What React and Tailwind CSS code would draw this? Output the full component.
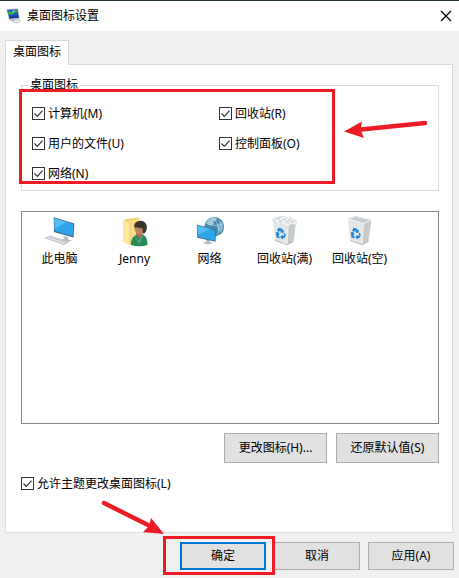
import React, { useState } from "react";

const DESKTOP_OPTIONS = [
  { id: "computer", label: "计算机(M)" },
  { id: "recycle", label: "回收站(R)" },
  { id: "files", label: "用户的文件(U)" },
  { id: "panel", label: "控制面板(O)" },
  { id: "network", label: "网络(N)" },
];

function TitleIcon() {
  return (
    <svg className="h-4 w-4" viewBox="0 0 16 16" aria-hidden="true">
      <path d="M2 10l9-1 3 3-5 2-5-1z" fill="#c3c7ca" />
      <path d="M.5 1L12 .5l1.500 10L3 11z" fill="#aeb8c2" />
      <path d="M1.300 2L11.500 1.300l1.200 8.500L3.500 10.500z" fill="#2450c8" />
      <path d="M1.500 4c2-1.500 3-.5 4 0s3-2.600 6-2.200l.4 2.200c-3-.3-4 2.500-6 2.800S3.500 5.500 2.300 7z" fill="#2fae4e" />
      <path d="M3.200 8.500c3-2 6 .5 9.200-1.500l.3 2.800-9.200.7z" fill="#173c96" />
      <path d="M6 3l3-1-2 3z" fill="#8fd4f0" />
      <path d="M8 12l4-1.500 2.500 2-3 2.700-4.500-1z" fill="#e4e6e6" stroke="#999" strokeWidth=".4" />
    </svg>
  );
}

function ComputerIcon() {
  return (
    <svg className="h-8 w-8" viewBox="0 0 32 32" aria-hidden="true">
      <path d="M19 20l5 1v2.500l4 .8-4 1.400-6-2 2.500-1z" fill="#b3bdc4" />
      <path d="M9.700 1.300l20.600 6.200-.8 14L10 16z" fill="#37647f" />
      <path d="M10.400 2.300l19 5.800-.7 12.200-18.100-5.200z" fill="#2ea4ec" />
      <path d="M10.400 2.300l12 3.700-11.800 7z" fill="#58bcf6" />
      <path d="M1.300 22l5-1.800 18.200 5.700-4.500 2.600z" fill="#d5dadd" stroke="#a3adb4" strokeWidth=".6" />
      <path d="M3.500 21.500l16.500 5.400M6 22.800l3.500-1.500M10 24.100l3.500-1.500M14 25.400l3.500-1.500M18 26.700l3.500-1.500" fill="none" stroke="#eef1f2" strokeWidth=".6" />
      <path d="M5 21l16.500 5.300" fill="none" stroke="#9aa6ae" strokeWidth=".5" />
    </svg>
  );
}

function UserFolderIcon() {
  return (
    <svg className="h-8 w-8" viewBox="0 0 32 32" aria-hidden="true">
      <path d="M5 3.500L18.500 1.500l2 1V26l-9 3z" fill="#f0cf71" />
      <path d="M9 5l11-2.500v23l-9 3z" fill="#f8dc86" />
      <path d="M4 3.300L11 7v22.500L4 25.500z" fill="#ffe99f" />
      <path d="M11 7v22.500" stroke="#e2bd5c" strokeWidth=".6" />
      <path d="M12 29c-.5-7 3.500-10 8-11 5-.5 8.500 2.500 8.500 11-5 1.600-11 1.600-16.500 0z" fill="#2a8a5b" />
      <path d="M15 20.500l5 4 2-5 2 .5-3.500 8.500z" fill="#49a878" />
      <path d="M17.500 15.500l5 1-.5 5-2 1.200-3-3.400z" fill="#a06e4e" />
      <ellipse cx="20.700" cy="13.200" rx="4.900" ry="5.200" fill="#bd8460" />
      <path d="M15.700 12.500c-1.700-5 2-7.800 6-7.700 5 .2 7.600 5 5.500 10-.6 1.700-1.700 2.700-2.900 3-.8-1.800-.5-4-1-5.800-2.600.4-4.700-.2-6.100-1-.8.400-1.200 1-1.500 1.500z" fill="#3b352d" />
    </svg>
  );
}

function NetworkIcon() {
  return (
    <svg className="h-8 w-8" viewBox="0 0 32 32" aria-hidden="true">
      <circle cx="20.300" cy="10.800" r="9.800" fill="#4a86ab" />
      <path d="M12.500 6c2-3.500 6-5 9.500-4.500l1 2.500-3.500 1.500.5 2.500-3.500 1.500-2.500-1z" fill="#9fcbdd" />
      <path d="M25 4l3.500 3 .8 4.500-2.300 5-3-2-.8-4 2.300-2z" fill="#82b8d2" />
      <path d="M11.500 7c5 2.500 11 3 17 1M18 1.200c6 5 8 11 5.500 19" fill="none" stroke="#b9dbe9" strokeWidth=".7" />
      <path d="M12 23l4 1v2l3 1-5 1.500-5.500-1.700 3.500-1z" fill="#b4bec5" />
      <path d="M2.800 8.500L22 13.600l-.4 12.200L3.300 21.800z" fill="#3d738f" />
      <path d="M3.600 9.600l17.600 4.800-.4 10.300L4.100 21z" fill="#2fa6ec" />
      <path d="M3.600 9.600l13 3.500-12.700 5.500z" fill="#52baf6" />
    </svg>
  );
}

function RecycleBinIcon({ full }) {
  return (
    <svg className="h-8 w-8" viewBox="0 0 32 32" aria-hidden="true">
      <path d="M3.700 3L11.700 .5l15.600 3.700-8 3.300z" fill="#c9cdd0" />
      <path d="M3.700 3l15.600 4.500L18 28.700 6 24.500z" fill="#e3e6e8" />
      <path d="M19.300 7.500l8-3.300L24.500 25.500 18 28.700z" fill="#c5cacd" />
      <path d="M3.700 3l15.600 4.500 8-3.300M19.300 7.500L18 28.700" fill="none" stroke="#f6f7f8" strokeWidth=".9" />
      <path d="M3.700 3L11.700 .5l15.600 3.700" fill="none" stroke="#dde1e3" strokeWidth=".9" />
      <path d="M6 24.500l12 4.200 6.500-3.200" fill="none" stroke="#a9b0b5" strokeWidth=".8" />
      {full && (
        <g>
          <path d="M3.700 4l3-3 4 .8L14 0l4 1.500 4-.5 2.500 2.500 3 1.500-.5 4-5-1-4 3.500-4-3.500-4.500 1-3.500-3z" fill="#eff1f2" stroke="#c8cdd0" strokeWidth=".5" />
          <path d="M6 4l3.500-2 2 3.500 4-3 1.500 4 4.500-3.500 1 3.500 3-1.500M10 6l2.500 1.500M18 8l3-2" fill="none" stroke="#b6bdc1" strokeWidth=".7" />
        </g>
      )}
      <g fill="#1c84d9">
        <path d="M8 14.500l1.600-2.700 3.200.8 1 1.600 1.200-.3-.8 3.400-3.300-1.200 1-.5-.8-1.300-1 1.700z" />
        <path d="M15.800 16.700l1 2.800-1.700 2.700-1.600.1v1.400l-2.300-2.700 2.500-2.200v1.200l1.300-.3.300-.9-.7-1.300z" />
        <path d="M6.300 16.200l3-.2 1.500 3-1-.4-.5 1.200 1.200.6-.1 2.200-2.600-1.200-.9-2.700.5-1.500z" />
      </g>
    </svg>
  );
}

const ICONS = [
  { id: "pc", label: "此电脑", icon: <ComputerIcon /> },
  { id: "user", label: "Jenny", icon: <UserFolderIcon /> },
  { id: "net", label: "网络", icon: <NetworkIcon /> },
  { id: "full", label: "回收站(满)", icon: <RecycleBinIcon full /> },
  { id: "empty", label: "回收站(空)", icon: <RecycleBinIcon /> },
];

function Checkbox({ id, label, checked, onChange }) {
  return (
    <label htmlFor={id} className="flex h-[13px] items-center gap-[3px] whitespace-nowrap">
      <span className="grid h-[13px] w-[13px] shrink-0">
        <input
          id={id}
          type="checkbox"
          checked={checked}
          onChange={onChange}
          className="peer col-start-1 row-start-1 h-[13px] w-[13px] appearance-none border border-[#333] bg-white"
        />
        <svg
          className="pointer-events-none invisible col-start-1 row-start-1 h-[13px] w-[13px] peer-checked:visible"
          viewBox="0 0 13 13"
          aria-hidden="true"
        >
          <path d="M2.500 6.500l2.800 2.800 5.200-5.600" fill="none" stroke="#333" strokeWidth="1.200" />
        </svg>
      </span>
      {label}
    </label>
  );
}

function Button({ children, className }) {
  return (
    <button type="button" className={`border bg-[#e1e1e1] whitespace-nowrap ${className}`}>
      {children}
    </button>
  );
}

export default function App() {
  const [checked, setChecked] = useState({
    computer: true,
    recycle: true,
    files: true,
    panel: true,
    network: true,
    theme: true,
  });

  const toggle = (id) => setChecked({ ...checked, [id]: !checked[id] });

  return (
    <div className="bg-[#f0f0f0] font-['Noto_Sans','Noto_Sans_CJK_SC',sans-serif] text-[12px] leading-[14px] text-black">
      {/* Title bar */}
      <header className="flex h-[31px] items-center border-t border-[#26343b] bg-white pr-[7px] pl-[6px]">
        <TitleIcon />
        <h1 className="ml-[5px] flex-1">桌面图标设置</h1>
        <button type="button" aria-label="关闭" className="flex h-3 w-3 items-center justify-center">
          <svg className="h-3 w-3" viewBox="0 0 12 12" aria-hidden="true">
            <path d="M1 1l10 10M11 1L1 11" stroke="#000" strokeWidth="1.200" />
          </svg>
        </button>
      </header>

      <main className="pt-[9px] pr-[6px] pl-[5px]">
        {/* Tabs */}
        <div role="tablist" className="flex">
          <button
            type="button"
            role="tab"
            aria-selected="true"
            className="z-10 -mb-px h-[25px] border border-b-0 border-[#d9d9d9] bg-white px-[7px] pb-[2px]"
          >
            桌面图标
          </button>
        </div>

        <section className="border border-[#dcdcdc] bg-white pt-[13px] pr-[13px] pb-[42px] pl-[15px]">
          <div className="relative">
            <fieldset className="border border-[#dcdcdc] pb-[10px] pl-[10px]">
              <legend className="-ml-[4px] px-[2px]">桌面图标</legend>
              <div className="grid grid-cols-[187px_1fr] gap-y-[17px] pt-[15px]">
                {DESKTOP_OPTIONS.map((o) => (
                  <Checkbox
                    key={o.id}
                    id={o.id}
                    label={o.label}
                    checked={checked[o.id]}
                    onChange={() => toggle(o.id)}
                  />
                ))}
              </div>
            </fieldset>
            {/* Callout over the options */}
            <div className="pointer-events-none absolute top-[11px] -left-[2px] h-[95px] w-[316px] border-3 border-[#ed1c24]" />
            <svg
              className="pointer-events-none absolute top-[38px] left-[322px] h-[26px] w-[86px]"
              viewBox="0 0 86 26"
              aria-hidden="true"
            >
              <path d="M82 7L18 13.500" stroke="#ed1c24" strokeWidth="4.500" strokeLinecap="round" />
              <path d="M1 15.500L19 5.500l-1.500 8.500 3.500 8z" fill="#ed1c24" />
            </svg>
          </div>

          {/* Icon preview list */}
          <ul className="mt-5 flex h-[213px] items-start border border-[#828790] pt-[4px]">
            {ICONS.map((i) => (
              <li key={i.id} className="flex w-[75px] flex-col items-center gap-[4px] whitespace-nowrap">
                {i.icon}
                <span>{i.label}</span>
              </li>
            ))}
          </ul>

          <div className="mt-[9px] flex justify-end gap-[9px]">
            <Button className="h-[30px] w-[103px] border-[#adadad]">更改图标(H)...</Button>
            <Button className="h-[30px] w-[103px] border-[#adadad]">还原默认值(S)</Button>
          </div>

          <div className="mt-[14px] flex">
            <Checkbox
              id="theme"
              label="允许主题更改桌面图标(L)"
              checked={checked.theme}
              onChange={() => toggle("theme")}
            />
          </div>
        </section>
      </main>

      <footer className="flex justify-end gap-2 pt-[9px] pr-[5px] pb-2">
        <div className="relative">
          <Button className="h-[28px] w-[86px] border-2 border-[#0078d7]">确定</Button>
          {/* Callout over the confirm button */}
          <div className="pointer-events-none absolute -top-[6px] -left-[17px] z-10 h-[39px] w-[112px] border-3 border-[#ed1c24]" />
          <svg
            className="pointer-events-none absolute -top-[44px] -left-[80px] h-[38px] w-[66px]"
            viewBox="0 0 66 38"
            aria-hidden="true"
          >
            <path d="M4 5l46 23" stroke="#ed1c24" strokeWidth="4.500" strokeLinecap="round" />
            <path d="M64 36L51 20l-2 8-6 6z" fill="#ed1c24" />
          </svg>
        </div>
        <Button className="h-[28px] w-[86px] border-[#adadad]">取消</Button>
        <Button className="h-[28px] w-[86px] border-[#adadad]">应用(A)</Button>
      </footer>
    </div>
  );
}
